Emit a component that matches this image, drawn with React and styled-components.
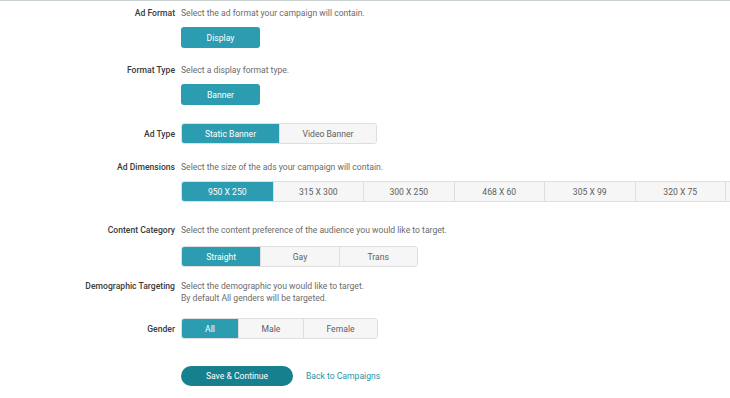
import React from "react";
import styled, { createGlobalStyle } from "styled-components";

const GlobalStyle = createGlobalStyle`
  html, body {
    margin: 0;
    padding: 0;
    background: #ffffff;
    overflow-x: hidden;
  }
  body {
    font-family: Roboto, "Liberation Sans", Arial, sans-serif;
    font-size: 8.6px;
    color: #666666;
  }
`;

const Page = styled.div`
  border-top: 1px solid #c9d2d1;
  padding-top: 5px;
  width: 730px;
`;

const Row = styled.div`
  display: grid;
  grid-template-columns: 175px 1fr;
  column-gap: 6px;
  align-items: ${(p) => (p.$center ? "center" : "start")};
  margin-top: ${(p) => p.$top || 0}px;
`;

const Label = styled.div`
  text-align: right;
  font-weight: 500;
  color: #3a3a3a;
  line-height: 12px;
  white-space: nowrap;
`;

const Field = styled.div`
  min-width: 0;
`;

const Description = styled.div`
  line-height: 12px;
  color: #6b6b6b;
  white-space: nowrap;
`;

const Control = styled.div`
  margin-top: ${(p) => p.$top || 8}px;
  display: flex;
`;

const SolidButton = styled.button`
  width: 79px;
  height: 21px;
  border: none;
  border-radius: 3px;
  background: #2c9db1;
  color: #ffffff;
  font-family: inherit;
  font-size: 8.6px;
  padding: 0;
`;

const Group = styled.div`
  display: inline-flex;
  flex: none;
  height: 21px;
  border: 1px solid #dedede;
  border-radius: 3px;
  overflow: hidden;
  box-sizing: border-box;
  vertical-align: top;
`;

const Option = styled.button`
  flex: none;
  width: ${(p) => p.$width}px;
  height: 100%;
  border: none;
  border-left: 1px solid #dedede;
  background: #f6f6f6;
  color: #5e5e5e;
  font-family: inherit;
  font-size: 8.6px;
  padding: 0;

  &:first-child {
    border-left: none;
  }

  ${(p) =>
    p.$active &&
    `
    background: #2c9db1;
    color: #ffffff;
  `}
`;

const Actions = styled.div`
  display: flex;
  align-items: center;
  gap: 13px;
  margin-top: 27px;
  margin-left: 181px;
`;

const SaveButton = styled.button`
  width: 112px;
  height: 20px;
  border: none;
  border-radius: 10px;
  background: #17808f;
  color: #ffffff;
  font-family: inherit;
  font-size: 8.6px;
  padding: 0;
`;

const BackLink = styled.a`
  color: #2a93a5;
  font-size: 8.6px;
  text-decoration: none;
`;

const dimensions = ["950 X 250", "315 X 300", "300 X 250", "468 X 60", "305 X 99", "320 X 75"];

const ButtonGroup = ({ items, width }) => (
  <Group>
    {items.map((item, i) => (
      <Option key={item} $active={i === 0} $width={Array.isArray(width) ? width[i] : width}>
        {item}
      </Option>
    ))}
    {/* the bar carries on past the window edge */}
    {items.length > 5 && <Option $width={20} />}
  </Group>
);

const App = () => (
  <Page>
    <GlobalStyle />
    <Row $top={1}>
      <Label>Ad Format</Label>
      <Field>
        <Description>Select the ad format your campaign will contain.</Description>
        <Control>
          <SolidButton>Display</SolidButton>
        </Control>
      </Field>
    </Row>

    <Row $top={16}>
      <Label>Format Type</Label>
      <Field>
        <Description>Select a display format type.</Description>
        <Control>
          <SolidButton>Banner</SolidButton>
        </Control>
      </Field>
    </Row>

    <Row $top={18} $center>
      <Label>Ad Type</Label>
      <Field>
        <ButtonGroup items={["Static Banner", "Video Banner"]} width={97} />
      </Field>
    </Row>

    <Row $top={17}>
      <Label>Ad Dimensions</Label>
      <Field>
        <Description>Select the size of the ads your campaign will contain.</Description>
        <Control>
          <ButtonGroup items={dimensions} width={90.5} />
        </Control>
      </Field>
    </Row>

    <Row $top={22}>
      <Label>Content Category</Label>
      <Field>
        <Description>
          Select the content preference of the audience you would like to target.
        </Description>
        <Control $top={10}>
          <ButtonGroup items={["Straight", "Gay", "Trans"]} width={78.3} />
        </Control>
      </Field>
    </Row>

    <Row $top={13}>
      <Label>Demographic Targeting</Label>
      <Field>
        <Description>Select the demographic you would like to target.</Description>
        <Description>By default All genders will be targeted.</Description>
      </Field>
    </Row>

    <Row $top={14} $center>
      <Label>Gender</Label>
      <Field>
        <ButtonGroup items={["All", "Male", "Female"]} width={[56, 65, 74]} />
      </Field>
    </Row>

    <Actions>
      <SaveButton>Save &amp; Continue</SaveButton>
      <BackLink href="#">Back to Campaigns</BackLink>
    </Actions>
  </Page>
);

export default App;
